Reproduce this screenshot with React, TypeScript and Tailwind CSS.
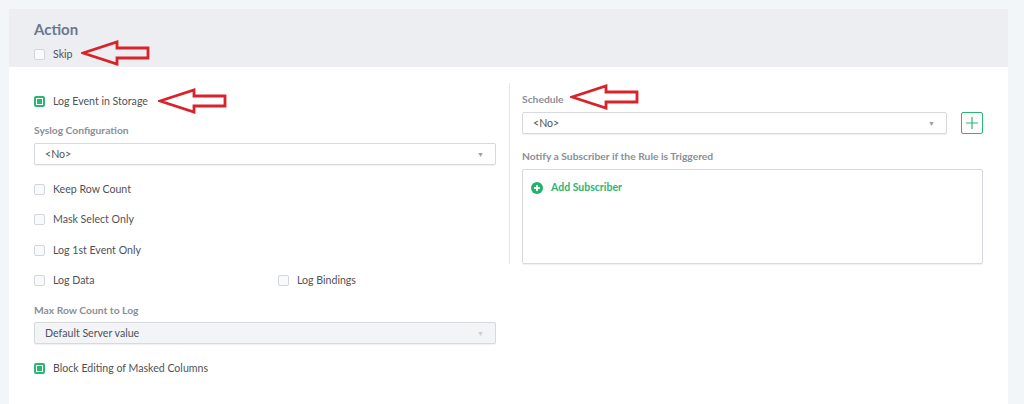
import type { ReactNode } from 'react';

const font = { fontFamily: 'Lato, "Open Sans", Arial, sans-serif' };

function Check({ checked = false, label }: { checked?: boolean; label: string }) {
  return (
    <label className="flex h-[20px] items-center gap-[8px] text-[10.6px] text-[#505256]">
      {checked ? (
        <span className="flex h-[11px] w-[11px] items-center justify-center rounded-[2px] border-[2px] border-[#2bb673] bg-white">
          <span className="h-[5px] w-[5px] bg-[#2bb673]" />
        </span>
      ) : (
        <span className="h-[11px] w-[11px] rounded-[2px] border border-[#d3d7dc] bg-[#f9fafb]" />
      )}
      <span className="pt-[2px]">{label}</span>
    </label>
  );
}

function Label({ children, className = '' }: { children: ReactNode; className?: string }) {
  return (
    <div className={`flex h-[14px] items-center pt-[2px] text-[10.3px] font-bold text-[#8a8f97] ${className}`}>
      {children}
    </div>
  );
}

function Select({ value, disabled = false, className = '' }: { value: string; disabled?: boolean; className?: string }) {
  return (
    <div
      className={`flex h-[22px] items-center justify-between rounded-[2px] border border-[#d6d9dd] pl-[10px] pr-[11px] text-[10.6px] text-[#505256] shadow-[0_1px_1px_rgba(0,0,0,0.06)] ${disabled ? 'bg-[#f2f4f6]' : 'bg-white'} ${className}`}
    >
      <span className="pt-[1px]">{value}</span>
      <span className={`text-[7px] ${disabled ? 'text-[#c9cdd2]' : 'text-[#9a9ea4]'}`}>▼</span>
    </div>
  );
}

function Arrow({ className }: { className: string }) {
  return (
    <svg className={`absolute ${className}`} width="70" height="26" viewBox="0 0 70 26" fill="none">
      <path
        d="M2 13 L36 2 L36 8 L67 8 L67 18 L36 18 L36 24 Z"
        stroke="#d9232b"
        strokeWidth="2.8"
        strokeLinejoin="miter"
      />
    </svg>
  );
}

export default function App() {
  return (
    <div className="relative min-h-[404px] w-[1024px] overflow-hidden bg-[#f3f6f9] pl-[9px] pt-[9px]" style={font}>
      <div className="w-[999px] bg-white">
        {/* header */}
        <div className="h-[58px] bg-[#eceef1] px-[25px] pt-[11px]">
          <div className="text-[15px] font-bold leading-[18px] text-[#6d7790]">Action</div>
          <div className="mt-[6px]">
            <Check label="Skip" />
          </div>
        </div>

        {/* body */}
        <div className="flex px-[25px] pb-[40px]">
          <div className="w-[462px] pt-[24px]">
            <Check checked label="Log Event in Storage" />
            <Label className="mt-[12px]">Syslog Configuration</Label>
            <Select value="<No>" className="mt-[6px]" />
            <div className="mt-[14px] flex flex-col gap-[10px]">
              <Check label="Keep Row Count" />
              <Check label="Mask Select Only" />
              <div className="mt-[1px]">
                <Check label="Log 1st Event Only" />
              </div>
              <div className="flex">
                <div className="w-[244px]">
                  <Check label="Log Data" />
                </div>
                <Check label="Log Bindings" />
              </div>
            </div>
            <Label className="mt-[13px]">Max Row Count to Log</Label>
            <Select value="Default Server value" disabled className="mt-[5px]" />
            <div className="mt-[14px]">
              <Check checked label="Block Editing of Masked Columns" />
            </div>
          </div>

          <div className="ml-[13px] mt-[16px] self-start border-l border-[#e3e6ea] pl-[12px] pt-[9px]">
            <div className="w-[461px]">
              <Label>Schedule</Label>
              <div className="mt-[6px] flex items-center">
                <Select value="<No>" className="w-[425px]" />
                <button className="ml-[14px] flex h-[22px] w-[22px] items-center justify-center rounded-[2px] border border-[#2bb673] bg-white">
                  <svg width="14" height="14" viewBox="0 0 14 14">
                    <path d="M7 1 V13 M1 7 H13" stroke="#2bb673" strokeWidth="1.2" />
                  </svg>
                </button>
              </div>
              <Label className="mt-[15px]">Notify a Subscriber if the Rule is Triggered</Label>
              <div className="mt-[6px] h-[95px] rounded-[2px] border border-[#d6d9dd] shadow-[0_1px_1px_rgba(0,0,0,0.06)] px-[8px] pt-[10px]">
                <div className="flex items-center gap-[8px] text-[10.5px] font-bold text-[#2bb673]">
                  <svg width="12" height="12" viewBox="0 0 12 12">
                    <circle cx="6" cy="6" r="6" fill="#22b36b" />
                    <path d="M6 3 V9 M3 6 H9" stroke="white" strokeWidth="1.8" />
                  </svg>
                  <span>Add Subscriber</span>
                </div>
              </div>
            </div>
          </div>
        </div>
      </div>

      <Arrow className="left-[81px] top-[40px]" />
      <Arrow className="left-[158px] top-[88px]" />
      <Arrow className="left-[570px] top-[84px]" />
    </div>
  );
}
